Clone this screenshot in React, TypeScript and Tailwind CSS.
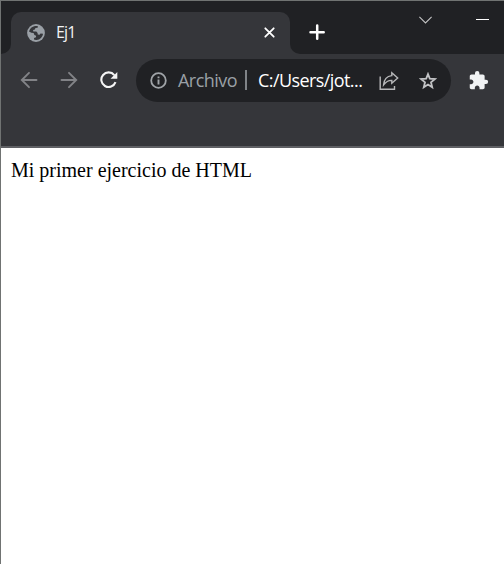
import React from "react";
import { MdExtension } from "react-icons/md";

function Globe() {
  return (
    <svg className="h-[18px] w-[18px] shrink-0" viewBox="0 0 18 18" fill="none">
      <circle cx="9" cy="9" r="8.9" fill="#9aa0a6" />
      <path d="M2 7.4C2.8 4.5 5 2.5 8 2 9 2 10.2 2.1 11 2.3L10.6 3.7 8.4 4.1 7.9 5.5 6.1 6 6.3 7.5 9.3 7.6 10.6 9.1 10.7 10.6 12.6 10.7 13.5 9.5 16 9.7C15.7 13 13 15.7 9.6 16L7.2 15.8 7 14 9 13.2 9.1 11.7 7.4 10.9 6.6 9 4.3 8.7Z" fill="#35363a" />
    </svg>
  );
}

function Arrow({ flip = false }: { flip?: boolean }) {
  return (
    <svg className={flip ? "h-[18px] w-[18px] shrink-0 rotate-180" : "h-[18px] w-[18px] shrink-0"} viewBox="0 0 18 18" fill="none" stroke="#828387" strokeWidth="1.9" strokeLinecap="round">
      <path d="M16.5 9H2M9 1.8 1.8 9 9 16.2" />
    </svg>
  );
}

function Reload() {
  return (
    <svg className="h-[18px] w-[18px] shrink-0" viewBox="0 0 18 18" fill="none">
      <path d="M14.3 4.1A7.3 7.3 0 1 0 15.5 11.2" stroke="#f5f5f5" strokeWidth="2.1" />
      <path d="M17.3 1V7.8H10.5Z" fill="#f5f5f5" />
    </svg>
  );
}

function Info() {
  return (
    <svg className="h-[17px] w-[17px] shrink-0" viewBox="0 0 17 17" fill="none" stroke="#a0a4a8">
      <circle cx="8.5" cy="8.5" r="7.3" strokeWidth="1.8" />
      <path d="M8.5 7.6v5M8.5 4.4v1.9" strokeWidth="1.9" />
    </svg>
  );
}

function Share() {
  return (
    <svg className="h-5 w-5 shrink-0" viewBox="0 0 20 20" fill="none" stroke="#b7b8ba" strokeWidth="1.4">
      <path d="M1.2 5.5V18.3H15.5V15" />
      <path d="M12.8 1.7 18.7 7 12.8 12.2V9.4C9.4 9.2 7 10.7 4.6 13.9 5 8.6 8 5.1 12.8 4.6Z" />
    </svg>
  );
}

function Star() {
  return (
    <svg className="h-[18px] w-[18px] shrink-0" viewBox="0 0 18 18" fill="none" stroke="#c2c3c5" strokeWidth="1.8">
      <path d="M9 2.1 10.8 6.7 15.8 7.1 12 10.3 13.2 15.3 9 12.6 4.8 15.3 6 10.3 2.2 7.1 7.2 6.7Z" />
    </svg>
  );
}

function TabStrip() {
  return (
    <div className="flex h-[53px] shrink-0 items-end bg-[#202124]">
      <div className="h-[10px] w-[10px] bg-[#35363a]">
        <div className="h-full w-full rounded-br-[10px] bg-[#202124]" />
      </div>
      <div className="flex h-[42px] w-[279px] items-center rounded-t-[10px] bg-[#35363a] pl-4 pr-[15px]">
        <Globe />
        <span className="-mt-[2px] ml-[11px] text-[16px] leading-5 tracking-[-0.9px] text-[#f1f3f4]">Ej1</span>
        <svg className="ml-auto h-[11px] w-[11px] -translate-y-px" viewBox="0 0 11 11" stroke="#fff" strokeWidth="1.8" strokeLinecap="round">
          <path d="m1.3 1.3 8.4 8.4M9.7 1.3 1.3 9.7" />
        </svg>
      </div>
      <div className="h-[10px] w-[10px] bg-[#35363a]">
        <div className="h-full w-full rounded-bl-[10px] bg-[#202124]" />
      </div>
      <svg className="mb-[14px] ml-[9px] h-4 w-4" viewBox="0 0 16 16" stroke="#fff" strokeWidth="2.5" strokeLinecap="round">
        <path d="M8.2 1.5v13.2M1.5 8.2h13.2" />
      </svg>
      <svg className="mb-[30px] ml-[94px] h-[8px] w-[13px]" viewBox="0 0 13 8" fill="none" stroke="#c3c3c4" strokeWidth="1.1">
        <path d="m.4.8 6.1 6.1L12.6.8" />
      </svg>
      <div className="mb-[34px] ml-11 h-px w-[13px] bg-white" />
    </div>
  );
}

function Toolbar() {
  return (
    <div className="h-[92px] shrink-0 bg-[#35363a] pt-[5px]">
      <div className="flex h-[43px] items-center pl-[19px]">
        <div className="flex pb-[2px]"><Arrow /></div>
        <div className="ml-[22px] flex pb-[2px]"><Arrow flip /></div>
        <div className="ml-[22px] flex pb-px"><Reload /></div>
        <div className="ml-[18px] flex h-[43px] w-[315px] shrink-0 items-center rounded-full bg-[#202124] pl-[14px]">
          <Info />
          <span className="ml-[11px] w-[59px] whitespace-nowrap pb-px text-[18px] leading-6 tracking-[-0.55px] text-[#9aa0a6]">Archivo</span>
          <div className="mb-px ml-2 h-5 w-[2px] bg-[#808387]" />
          <span className="ml-[11px] w-[105px] whitespace-nowrap pb-px text-[18px] leading-6 tracking-[-0.58px] text-white">C:/Users/jot...</span>
          <div className="ml-4 flex"><Share /></div>
          <div className="ml-[20px] flex"><Star /></div>
        </div>
        <MdExtension className="mb-px ml-[17px] h-[21px] w-[21px] shrink-0 text-[#f1f3f4]" />
      </div>
    </div>
  );
}

export default function App() {
  return (
    <div className="flex h-[564px] w-[504px] flex-col overflow-hidden border-l border-t border-[#707372] bg-white font-['Open_Sans',sans-serif]">
      <TabStrip />
      <Toolbar />
      <div className="h-[2px] shrink-0 bg-[#5f6064]" />
      <main className="flex-1 bg-white pl-[10px] pt-[10px] font-['Liberation_Serif',serif] text-[20px] leading-6 text-black">
        Mi primer ejercicio de HTML
      </main>
    </div>
  );
}
